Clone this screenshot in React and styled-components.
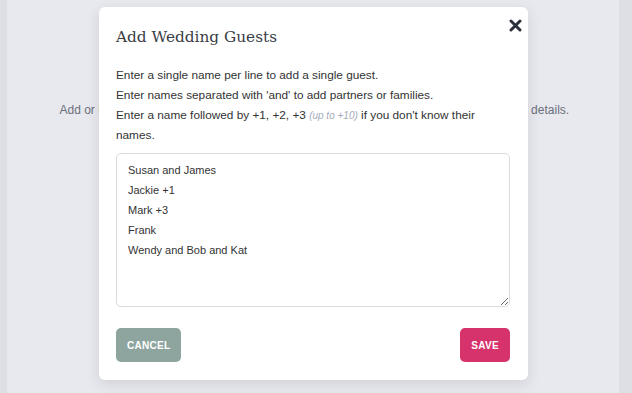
import styled, { createGlobalStyle } from "styled-components";

const GlobalStyle = createGlobalStyle`
  html, body {
    margin: 0;
    padding: 0;
    background: #dedfe4;
    font-family: "Liberation Sans", Arial, sans-serif;
  }
  * { box-sizing: border-box; }
`;

const App = () => {
  return (
    <>
      <GlobalStyle />
      <Page>
        <Panel>
          <Intro>
            Add or import the guests you are inviting to your wedding, then open a guest to edit their details.
          </Intro>
        </Panel>

        <Modal>
          <CloseButton aria-label="Close">
            <svg width="13" height="13" viewBox="0 0 13 13">
              <path d="M2 2 L11 11 M11 2 L2 11" stroke="#2b303b" strokeWidth="3" strokeLinecap="round" />
            </svg>
          </CloseButton>
          <Title>Add Wedding Guests</Title>
          <Help>
            <p>Enter a single name per line to add a single guest.</p>
            <p>Enter names separated with 'and' to add partners or families.</p>
            <p>
              Enter a name followed by +1, +2, +3 <Hint>(up to +10)</Hint> if you don't know their
              names.
            </p>
          </Help>
          <GuestInput
            defaultValue={"Susan and James\nJackie +1\nMark +3\nFrank\nWendy and Bob and Kat"}
          />
          <Actions>
            <Button $variant="cancel">Cancel</Button>
            <Button $variant="save">Save</Button>
          </Actions>
        </Modal>
      </Page>
    </>
  );
};

export default App;

const Page = styled.div`
  position: relative;
  width: 632px;
  height: 393px;
  overflow: hidden;
  padding-left: 7px;
`;

const Panel = styled.div`
  width: 612px;
  height: 100%;
  background: #e8e9ee;
  display: flex;
  flex-direction: column;
  align-items: center;
  padding-top: 102px;
`;

const Intro = styled.div`
  width: 507px;
  font-size: 12px;
  line-height: 16px;
  color: #6b6f7b;
  text-align: center;
  white-space: nowrap;
`;

const Modal = styled.div`
  position: absolute;
  left: 99px;
  top: 7px;
  width: 429px;
  height: 373px;
  background: #ffffff;
  border-radius: 6px;
  box-shadow: 0 4px 14px rgba(40, 45, 60, 0.12);
  padding: 18px 18px 18px 17px;
  display: flex;
  flex-direction: column;
`;

const CloseButton = styled.button`
  position: absolute;
  top: 11px;
  right: 5px;
  width: 15px;
  height: 15px;
  padding: 0;
  border: none;
  background: none;
  display: flex;
  align-items: center;
  justify-content: center;
  cursor: pointer;
`;

const Title = styled.h2`
  margin: 0;
  font-family: "DejaVu Serif", "Liberation Serif", serif;
  font-weight: 400;
  font-size: 15.3px;
  line-height: 24px;
  color: #3a3d46;
`;

const Help = styled.div`
  margin-top: 16px;
  font-size: 11.8px;
  line-height: 20px;
  color: #333333;

  p {
    margin: 0;
  }
`;

const Hint = styled.i`
  font-size: 10px;
  line-height: 1;
  color: #a3abbb;
`;

const GuestInput = styled.textarea`
  margin-top: 8px;
  width: 394px;
  height: 154px;
  padding: 6px 11px 4px;
  border: 1px solid #dadbdf;
  border-radius: 5px;
  font-family: "Liberation Sans", Arial, sans-serif;
  font-size: 11px;
  line-height: 20px;
  color: #333333;
  resize: vertical;
  outline: none;
`;

const Actions = styled.div`
  margin-top: 21px;
  display: flex;
  justify-content: space-between;
  width: 394px;
`;

const Button = styled.button`
  height: 34px;
  padding: 0 11px;
  border: none;
  border-radius: 5px;
  background: ${(p) => (p.$variant === "save" ? "#d6336c" : "#8ea59f")};
  color: #ffffff;
  font-family: "Liberation Sans", Arial, sans-serif;
  font-size: 10px;
  font-weight: 700;
  letter-spacing: 0.3px;
  text-transform: uppercase;
  cursor: pointer;
`;
